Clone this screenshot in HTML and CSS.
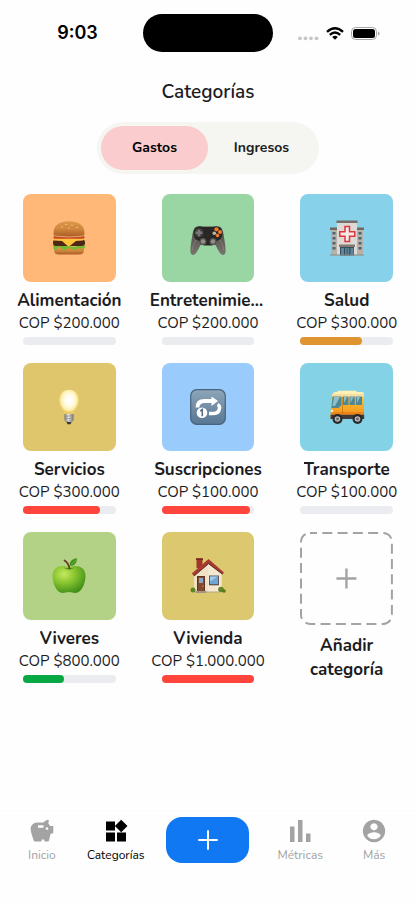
FILE: index.html
```html
<!DOCTYPE html>
<html lang="es">
<head>
<meta charset="utf-8">
<meta name="viewport" content="width=device-width, initial-scale=1">
<title>Categorías</title>
<link rel="stylesheet" href="styles.css">
</head>
<body>
<div class="status">
  <time class="status-time">9:03</time>
  <div class="island"></div>
  <svg class="status-icons" width="82" height="18" viewBox="0 0 82 18" aria-hidden="true">
    <g fill="#c6c6c8"><circle cx="2" cy="13.300" r="1.900"/><circle cx="7.500" cy="13.300" r="1.900"/><circle cx="13" cy="13.300" r="1.900"/><circle cx="18.500" cy="13.300" r="1.900"/></g>
    <g fill="none" stroke="#000" stroke-width="2.400"><path d="M29 6.800Q37 -.4 45 6.800"/><path d="M31.800 9.800Q37 5.200 42.200 9.800"/></g>
    <path d="M34.200 11.900Q37 9.800 39.800 11.900L37 14.800Z"/>
    <rect x="53.500" y="2.500" width="25" height="12" rx="4" fill="#fff" stroke="#a5a5a5"/>
    <rect x="55" y="4" width="22" height="9" rx="2.500"/>
    <path d="M80 6.500q1.500 0 1.500 2t-1.500 2z" fill="#a5a5a5"/>
  </svg>
</div>

<main>
  <h1>Categorías</h1>
  <div class="segmented">
    <button type="button" class="segment segment-active" aria-pressed="true">Gastos</button>
    <button type="button" class="segment" aria-pressed="false">Ingresos</button>
  </div>

  <ul class="grid">
    <li class="category">
      <div class="tile orange"><svg viewBox="0 0 36 36" aria-hidden="true">
        <defs><linearGradient id="bun" x2="0" y2="1"><stop stop-color="#dc9749"/><stop offset=".5" stop-color="#d0863e"/><stop offset="1" stop-color="#a85c25"/></linearGradient></defs>
        <path d="M3 27h30v3q0 4.500-5 4.500H8Q3 34.500 3 30z" fill="url(#bun)"/>
        <path d="M2 25q2-1 4 0t5 1 5 0 5 .5 5-.5 4 0 4-1q1 2-.5 3-2 1-4 .5t-4 .8-5-.5-5 .5-5-.8-5 .5-3-1z" fill="#76b82f"/>
        <rect x="2" y="19.500" width="32" height="6.500" rx="3" fill="#4c2815"/>
        <path d="M3 18.500h30l-1 2-7 .5-6 4.800q-1.500.8-3-.3L11 21l-8-.5z" fill="#ffc33b"/>
        <rect x="2.500" y="15.500" width="31" height="3.300" rx="1.500" fill="#c84725"/>
        <path d="M2.500 14.500Q2 1.500 18 1.300 34 1.500 33.500 14.500 33 17 18 16.800 3 17 2.500 14.500z" fill="url(#bun)"/>
        <path d="M3.500 16Q18 18 32.500 16" stroke="#e3a565" fill="none"/>
        <g fill="#f3c588"><ellipse cx="15" cy="4.500" rx="1.200" ry=".6"/><ellipse cx="21" cy="5" rx="1.200" ry=".6"/><ellipse cx="11" cy="7" rx="1" ry=".6"/><ellipse cx="26" cy="7.500" rx="1" ry=".6"/><ellipse cx="18" cy="8" rx="1" ry=".5"/></g>
      </svg></div>
      <h2>Alimentación</h2><p>COP $200.000</p>
      <div class="bar"></div>
    </li>
    <li class="category">
      <div class="tile green"><svg viewBox="0 0 36 36" aria-hidden="true">
        <defs><linearGradient id="pad" x2="0" y2="1"><stop stop-color="#4b4945"/><stop offset="1" stop-color="#77736f"/></linearGradient></defs>
        <path d="M5 7.500Q8 5 13 6.500h10q5-1.500 8 1 2 2 3 10 2 10 1.500 15-1 3.500-4 2-2-1.200-6-9.500H10.500q-4 8.300-6 9.500-3 1.500-4-2Q0 28 2 17.500q1-8 3-10z" fill="url(#pad)"/>
        <path d="M5.500 8Q9 6 13 7h10q4-1 7.500 1 3 3 1.500 8-1 4-5.500 5-2.500 5-6 4.500h-5Q12 26 9.500 21 5 20 4 16q-1.500-5 1.500-8z" fill="#282725"/>
        <circle cx="9" cy="12.800" r="4.600" fill="#403e3b"/><path d="M7.700 9.400h2.600v2.100h2.100v2.600h-2.100v2.100H7.700v-2.100H5.600v-2.600h2.100z" fill="#777"/>
        <circle cx="13" cy="21.500" r="3.500" fill="#56534e"/><circle cx="13" cy="21.500" r="2.200" fill="#918e87"/><circle cx="23" cy="21.500" r="3.500" fill="#56534e"/><circle cx="23" cy="21.500" r="2.200" fill="#918e87"/>
        <g fill="#f47b2a"><circle cx="26.500" cy="9.300" r="2.100"/><circle cx="30" cy="12" r="2"/><circle cx="27.500" cy="15.500" r="1.800"/></g><circle cx="24.300" cy="13.300" r="1.800" fill="#bdb7ae"/><circle cx="18" cy="15" r=".8" fill="#5d2824"/>
        <path d="M2 31Q3 24 6 20M34 31q-1-7-4-11" stroke="#8a8783" fill="none" stroke-width=".7"/>
      </svg></div>
      <h2>Entretenimiento</h2><p>COP $200.000</p>
      <div class="bar"></div>
    </li>
    <li class="category">
      <div class="tile sky"><svg viewBox="0 0 36 36" aria-hidden="true">
        <path d="M2 8h32v27H2z" fill="#b6b1ab"/><path d="M1 7.500h8V10H1zM27 7.500h8V10h-8z" fill="#716961"/>
        <path d="M8 2h20v33H8z" fill="#ded9d5"/><path d="M7.500.5h21V3h-21z" fill="#756d66"/>
        <path d="M16 6.500h4.500v5.200h5.300v4.500h-5.300v5.300H16v-5.300h-5.200v-4.500H16z" fill="#f6e9e7" stroke="#dc3740" stroke-width="1.500"/>
        <g fill="#4d6470"><path d="M3.500 12h3v2.500h-3zM3.500 17h3v2.500h-3zM3.500 22h3v2.500h-3zM3.500 27h3v2.500h-3zM29.500 12h3v2.500h-3zM29.500 17h3v2.500h-3zM29.500 22h3v2.500h-3zM29.500 27h3v2.500h-3z"/></g>
        <path d="M10 24.500h16V27H10z" fill="#837a72"/><path d="M11 27h14v8.500H11z" fill="#334e61"/><path d="M12 28h3v7h-3zM16 28h1.700v7H16zM18.500 28h1.700v7h-1.700zM21.500 28h3v7h-3z" fill="#60849a"/>
        <path d="M1 34.500h34v1H1z" fill="#8d8580"/>
      </svg></div>
      <h2>Salud</h2><p>COP $300.000</p>
      <div class="bar"><div class="fill amber" style="width:67%"></div></div>
    </li>
    <li class="category">
      <div class="tile gold"><svg viewBox="0 0 36 36" aria-hidden="true">
        <defs><radialGradient id="bulb" cy=".42"><stop stop-color="#fff"/><stop offset=".5" stop-color="#fffbe4"/><stop offset=".8" stop-color="#ffefac"/><stop offset="1" stop-color="#eccb67"/></radialGradient><linearGradient id="cap"><stop stop-color="#77736e"/><stop offset=".45" stop-color="#eee"/><stop offset="1" stop-color="#706c68"/></linearGradient></defs>
        <path d="M18 .8C11.500.8 8 5.500 8 11c0 6 4.500 8 5.200 14.500h9.600C23.500 19 28 17 28 11 28 5.500 24.500.8 18 .8z" fill="url(#bulb)"/>
        <path d="M13.500 25h9v5.500q0 2-2 2.500l-1 2h-3l-1-2q-2-.5-2-2.500z" fill="url(#cap)"/><path d="M13.500 27.500l9-1M13.500 30l9-1M15 32.500l6-1" stroke="#8f8a85" stroke-width=".8"/><path d="M15.500 33h5l-1 2.300h-3z" fill="#3e3c3a"/>
      </svg></div>
      <h2>Servicios</h2><p>COP $300.000</p>
      <div class="bar"><div class="fill red" style="width:83%"></div></div>
    </li>
    <li class="category">
      <div class="tile blue"><svg viewBox="0 0 36 36" aria-hidden="true">
        <defs><linearGradient id="key" x2="0" y2="1"><stop stop-color="#8da5b8"/><stop offset="1" stop-color="#587793"/></linearGradient></defs>
        <rect x=".7" y=".7" width="34.600" height="34.600" rx="6" fill="url(#key)" stroke="#47647d" stroke-width="1.200"/>
        <path d="M7.500 18.500q0-6.500 7-6.500H23" fill="none" stroke="#fff" stroke-width="3.800"/><path d="M21.500 7.500L28 12l-6.500 5z" fill="#fff"/>
        <path d="M27.500 15.500q2.500 1 2 4-.7 5-6 5H19" fill="none" stroke="#fff" stroke-width="3.500"/>
        <circle cx="12" cy="23.700" r="5.300" fill="#fff"/><path d="M10.300 22l2-1.500v6.800" fill="none" stroke="#526f87" stroke-width="1.600"/>
      </svg></div>
      <h2>Suscripciones</h2><p>COP $100.000</p>
      <div class="bar"><div class="fill red" style="width:95%"></div></div>
    </li>
    <li class="category">
      <div class="tile aqua"><svg viewBox="0 0 36 36" aria-hidden="true">
        <defs><linearGradient id="bus" x2="0" y2="1"><stop stop-color="#ffcd36"/><stop offset="1" stop-color="#f28a18"/></linearGradient></defs>
        <path d="M8 3l1-1.200h18L28 3h5q2 0 2 3H3q1-3 4-3z" fill="#fff0b3"/>
        <path d="M3 5h32v22.500q0 2-2 2H3q-2 0-1.500-3L2 17z" fill="url(#bus)"/><path d="M3 5h32v3H3z" fill="#f6dda0"/>
        <path d="M3.500 7.500h9V16l-3 3H2.500zM14 7.500h5.500V16H14zM20.500 7.500h5.300V16h-5.300zM26.800 7.500h6.200V16h-6.200z" fill="#4e8796"/>
        <path d="M5 8h6l-5 9H3.500zM15 8h3l-3 6zM21.500 8h3l-3 6zM28 8h3l-3 6z" fill="#8fbec7"/>
        <path d="M1.800 25.500h33.400V30H1.500z" fill="#403b3a"/><path d="M2 23h33v2.500H2z" fill="#ed8419"/><path d="M13.500 8v17" stroke="#ad6b18" stroke-width=".6"/>
        <circle cx="3" cy="22" r="1.200" fill="#fff4cc"/>
        <circle cx="8.500" cy="30" r="5" fill="#28282a"/><circle cx="8.500" cy="30" r="2.800" fill="#bbb"/><circle cx="8.500" cy="30" r="1.400" fill="#69696b"/>
        <circle cx="28.500" cy="30" r="5" fill="#28282a"/><circle cx="28.500" cy="30" r="2.800" fill="#bbb"/><circle cx="28.500" cy="30" r="1.400" fill="#69696b"/>
      </svg></div>
      <h2>Transporte</h2><p>COP $100.000</p>
      <div class="bar"></div>
    </li>
    <li class="category">
      <div class="tile lime"><svg viewBox="0 0 36 36" aria-hidden="true">
        <defs><radialGradient id="apple" cx=".35" cy=".3" r=".75"><stop stop-color="#c5e95d"/><stop offset=".45" stop-color="#88c52f"/><stop offset="1" stop-color="#3f8d18"/></radialGradient></defs>
        <path d="M18 9.500C23 6.500 34.500 7 34.500 18c0 8-4.500 17-10 17-2.500 0-3.500-1-6.500-1s-4 1-6.500 1C6 35 1.500 26 1.500 18 1.500 7 13 6.500 18 9.500z" fill="url(#apple)"/>
        <path d="M12.500 9.500q5.500 3.800 11 0-5.500 1.500-11 0z" fill="#4d8c1e"/>
        <path d="M18.500 10.500Q17.500 5 13.500 2.500" fill="none" stroke="#633a1d" stroke-width="1.700" stroke-linecap="round"/>
        <path d="M18.500 8.500Q18 1 26 .3q.5 7-7.500 8.200z" fill="#46911f"/><path d="M19 8l6-6" stroke="#75b647" stroke-width=".7"/>
      </svg></div>
      <h2>Viveres</h2><p>COP $800.000</p>
      <div class="bar"><div class="fill emerald" style="width:44%"></div></div>
    </li>
    <li class="category">
      <div class="tile sand"><svg viewBox="0 0 36 36" aria-hidden="true">
        <path d="M6.500.5h6V10h-6z" fill="#9f382a"/><path d="M6 .3h7V2H6z" fill="#75291f"/>
        <path d="M4 15L18 3.500 31.500 15v19H4z" fill="#eee1c4"/><path d="M18 5l13.500 11v18H18z" fill="#f4e9d0"/>
        <path d="M1.800 15.500L18.500 1 34 14.500l-1.500 1.700-14-10.500L4 18z" fill="#a83a32"/><path d="M4 18L18.500 5.700l14 10.500" stroke="#562b26" fill="none"/>
        <path d="M7 18h8v15.500H7z" fill="#5e3224"/><path d="M8 19h6v14H8z" fill="#85482e"/><path d="M9 20h4v5H9z" fill="#86a6c6"/><circle cx="13" cy="28" r=".6" fill="#ebc76b"/>
        <path d="M19 17.500h10V27H19z" fill="#5d5a59"/><path d="M20 18.500h8V26h-8z" fill="#71a4d6"/><path d="M20 18.500h8l-8 5z" fill="#a2c8ec"/><path d="M19 27h10v1H19z" fill="#c5b799"/>
        <circle cx="3" cy="32" r="2.500" fill="#638426"/><circle cx="31" cy="31.500" r="2.800" fill="#638426"/><circle cx="34" cy="33" r="1.800" fill="#577820"/><path d="M5.500 33h11v2h-11z" fill="#a49483"/><path d="M16.500 33.500h13v1h-13z" fill="#b7a786"/>
      </svg></div>
      <h2>Vivienda</h2><p>COP $1.000.000</p>
      <div class="bar"><div class="fill red" style="width:100%"></div></div>
    </li>
    <li class="category">
      <button type="button" class="new">
        <svg class="new-box" viewBox="0 0 93 93" aria-hidden="true"><rect x="1" y="1" width="91" height="91" rx="9" fill="none" stroke="#a3a3a3" stroke-width="2" stroke-dasharray="10 5.300" stroke-dashoffset="3"/><path d="M46.500 36.500v20M36.500 46.500h20" stroke="#a3a3a3" stroke-width="2.400"/></svg>
        <span>Añadir categoría</span>
      </button>
    </li>
  </ul>
</main>

<nav>
  <a href="#inicio"><svg viewBox="0 0 24 24" aria-hidden="true"><path fill-rule="evenodd" d="M7.500 3.500H13.500Q15.500 1 18.300.8q.8 0 .5 1L18.300 4.500l2 2.500H23.300v7l-2.800 1L19 21.500q-.2 1-1.200 1h-2.600q-1 0-1-1V20.500h-2.500v1q0 1-1 1H5q-1 0-1.200-1Q.8 13.500.6 10 .8 4 7.500 3.500zM8 6.300v2.400h5.500V6.300zM17 8.200a1.300 1.300 0 1 0 .01 0z"/></svg>Inicio</a>
  <a href="#categorias" class="current" aria-current="page"><svg viewBox="0 0 24 24" aria-hidden="true"><path d="M2 2.500h9v9H2zM2 13.500h9v9H2zM13 13.500h9v9h-9zM17.200.7L23.500 7l-6.300 6.300L10.900 7z"/></svg>Categorías</a>
  <button type="button" class="add" aria-label="Añadir"><svg viewBox="0 0 24 24" aria-hidden="true"><path d="M12 3v18M3 12h18" stroke="#fff" stroke-width="2" stroke-linecap="round"/></svg></button>
  <a href="#metricas"><svg viewBox="0 0 24 24" aria-hidden="true"><path d="M2 7.500h4.500v15.500H2zM10 1h4.500v22H10zM18 14.500h4.500v8.500H18z"/></svg>Métricas</a>
  <a href="#mas"><svg viewBox="0 0 24 24" aria-hidden="true"><path fill-rule="evenodd" d="M12 .8a11.200 11.200 0 1 0 .01 0zM12 4.200a3.600 3.600 0 1 1-.01 0zM12 20.200q-4.200 0-6.700-3.500c.1-2.200 4.500-3.400 6.700-3.400s6.600 1.200 6.700 3.400q-2.500 3.500-6.700 3.500z"/></svg>Más</a>
</nav>
</body>
</html>
```
FILE: styles.css
```css
* { box-sizing: border-box; }

body {
  margin: 0;
  min-height: 100vh;
  display: flex;
  flex-direction: column;
  background: #fefefe;
  color: #1c1c1e;
  font-family: Nunito, "Open Sans", sans-serif;
}

button { border: 0; padding: 0; background: none; color: inherit; font: inherit; cursor: pointer; }

.status {
  display: grid;
  grid-template-columns: 1fr 130px 1fr;
  align-items: center;
  padding-top: 14px;
}
.status-time {
  justify-self: center;
  padding-left: 12px;
  color: #000;
  font: 600 18px/24px Inter, sans-serif;
}
.island { height: 38px; border-radius: 19px; background: #000; }
.status-icons { justify-self: center; margin: 2px 12px 0 0; }

main { flex: 1; }

h1 {
  margin: 28px 0 17px;
  font-size: 19px;
  line-height: 25px;
  font-weight: 600;
  text-align: center;
}

.segmented {
  display: flex;
  width: fit-content;
  margin: 0 auto;
  padding: 4px;
  border-radius: 26px;
  background: #f5f5f1;
}
.segment {
  width: 107px;
  height: 44px;
  padding-bottom: 2px;
  border-radius: 22px;
  font-size: 14px;
  font-weight: 700;
}
.segment-active { background: #facccd; color: #000; }

.grid {
  display: grid;
  grid-template-columns: repeat(3, minmax(0, 1fr));
  row-gap: 18px;
  margin: 20px 0 24px;
  padding: 0;
  list-style: none;
}
.category { display: flex; flex-direction: column; align-items: center; }

.tile {
  display: grid;
  place-items: center;
  width: 67%;
  height: 88px;
  border-radius: 8px;
}
.tile svg { width: 36px; height: 36px; }
.orange { background: #ffb878; }
.green { background: #9ad6a3; }
.sky { background: #88d1ea; }
.gold { background: #dfc66c; }
.blue { background: #99ccfc; }
.aqua { background: #84d2e6; }
.lime { background: #b3d286; }
.sand { background: #dbc86f; }

h2 {
  max-width: 84%;
  margin: 7px 0 0;
  overflow: hidden;
  text-overflow: ellipsis;
  white-space: nowrap;
  font-size: 17px;
  line-height: 24px;
  font-weight: 700;
}
.category p { margin: 0; font-size: 15px; line-height: 20px; }

.bar {
  width: 67%;
  height: 8px;
  margin-top: 4px;
  border-radius: 4px;
  background: #ebecef;
}
.fill { height: 100%; border-radius: 4px; }
.amber { background: #df942f; }
.red { background: #ff453c; }
.emerald { background: #08a845; }

.new {
  display: flex;
  flex-direction: column;
  align-items: center;
  gap: 9px;
  width: 67%;
  font-size: 17px;
  line-height: 24px;
  font-weight: 700;
}
.new-box { width: 100%; }

nav {
  display: grid;
  grid-template-columns: 2fr 2fr 3fr 2fr 2fr;
  align-items: start;
  min-height: 94px;
  padding: 6px 5px 0;
  border-top: 1px solid #fbfbfb;
}
nav a {
  display: flex;
  flex-direction: column;
  align-items: center;
  gap: 2px;
  padding-top: 2px;
  color: #a3a3a3;
  font-size: 12px;
  line-height: 20px;
  text-decoration: none;
}
nav svg { width: 24px; height: 24px; fill: currentColor; }
nav .current { color: #000; }
.add {
  display: grid;
  place-items: center;
  width: 83px;
  height: 46px;
  justify-self: center;
  border-radius: 16px;
  background: #0f78f2;
}
```
